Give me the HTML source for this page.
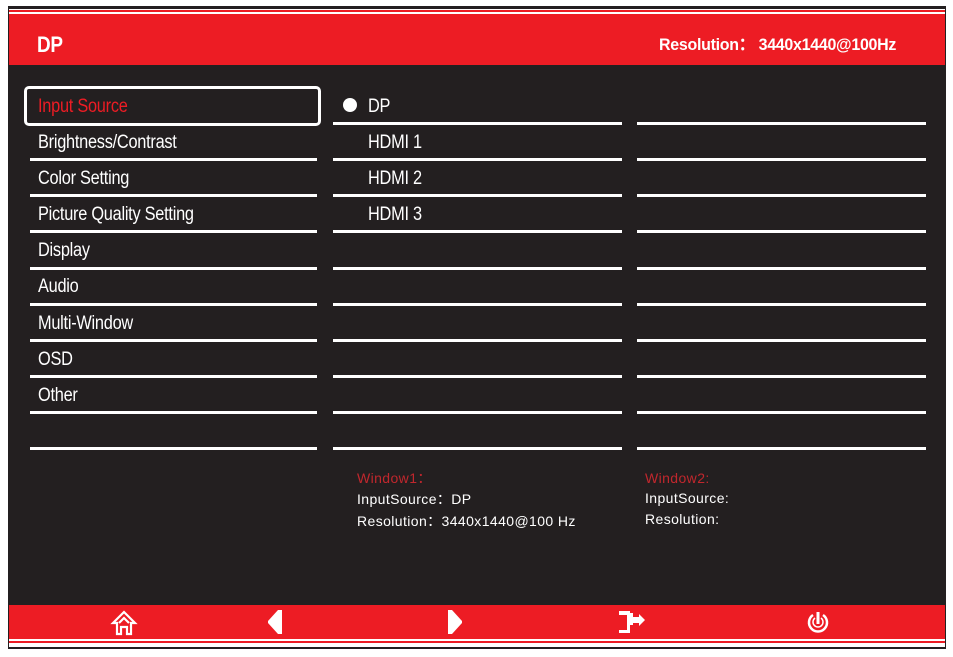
<!DOCTYPE html>
<html><head><meta charset="utf-8"><style>
*{margin:0;padding:0;box-sizing:border-box}
body{width:953px;height:657px;background:#fff;position:relative;overflow:hidden;font-family:"Liberation Sans",sans-serif}
.a{position:absolute}
.ln{position:absolute;height:3px;background:#fff}
.t{position:absolute;color:#fff;font-size:19px;line-height:20px;letter-spacing:-0.3px;transform:scaleX(0.86);transform-origin:0 0;white-space:nowrap}
.s{position:absolute;font-family:"Liberation Sans",sans-serif;font-size:14px;line-height:16px;color:#fff;letter-spacing:0.4px;white-space:nowrap}
</style></head><body>
<div class="a" style="left:8px;top:6px;width:938px;height:643px;background:#231f20"></div>
<div class="a" style="left:9px;top:9px;width:936px;height:3px;background:#fff"></div>
<div class="a" style="left:9px;top:10px;width:936px;height:2px;background:#ed1c24"></div>
<div class="a" style="left:9px;top:12px;width:936px;height:2px;background:#fff"></div>
<div class="a" style="left:9px;top:14px;width:936px;height:51px;background:#ed1c24"></div>
<div class="t" style="left:37px;top:35px;font-weight:bold;font-size:22px">DP</div>
<div class="t" style="left:659px;top:35px;font-weight:bold;font-size:17px;transform:scaleX(0.94)">Resolution： 3440x1440@100Hz</div>

<div class="a" style="left:9px;top:605px;width:936px;height:34px;background:#ed1c24"></div>
<div class="a" style="left:9px;top:639px;width:936px;height:2px;background:#fff"></div>
<div class="a" style="left:9px;top:641px;width:936px;height:2px;background:#ed1c24"></div>
<div class="a" style="left:9px;top:643px;width:936px;height:4px;background:#fff"></div>

<div class="a" style="left:24px;top:86px;width:297px;height:40px;border:3px solid #fff;border-radius:5px"></div>
<div class="t" style="left:38px;top:97px;color:#ed1c24">Input Source</div>
<div class="t" style="left:38px;top:133px">Brightness/Contrast</div>
<div class="t" style="left:38px;top:169px">Color Setting</div>
<div class="t" style="left:38px;top:205px">Picture Quality Setting</div>
<div class="t" style="left:38px;top:241px">Display</div>
<div class="t" style="left:38px;top:277px">Audio</div>
<div class="t" style="left:38px;top:314px">Multi-Window</div>
<div class="t" style="left:38px;top:350px">OSD</div>
<div class="t" style="left:38px;top:386px">Other</div>

<div class="a" style="left:343px;top:98px;width:14px;height:14px;border-radius:50%;background:#fff"></div>
<div class="t" style="left:368px;top:97px">DP</div>
<div class="t" style="left:368px;top:133px">HDMI 1</div>
<div class="t" style="left:368px;top:169px">HDMI 2</div>
<div class="t" style="left:368px;top:205px">HDMI 3</div>

<div id="lines"></div>
<script>
var ys=[122,158,194,230,267,303,339,375,411,447],h='';
ys.forEach(function(y,i){
 if(i>0)h+='<div class="ln" style="left:30px;top:'+y+'px;width:287px"></div>';
 h+='<div class="ln" style="left:333px;top:'+y+'px;width:289px"></div>';
 h+='<div class="ln" style="left:637px;top:'+y+'px;width:289px"></div>';
});
document.getElementById('lines').innerHTML=h;
</script>

<div class="s" style="left:357px;top:470px;color:#c1272d">Window1：</div>
<div class="s" style="left:357px;top:491px">InputSource：DP</div>
<div class="s" style="left:357px;top:513px">Resolution：3440x1440@100 Hz</div>
<div class="s" style="left:645px;top:470px;color:#c1272d">Window2:</div>
<div class="s" style="left:645px;top:490px">InputSource:</div>
<div class="s" style="left:645px;top:511px">Resolution:</div>

<svg class="a" style="left:110px;top:609px" width="30" height="28" viewBox="0 0 30 28" fill="none" stroke="#fff" stroke-width="2.2">
<path d="M3 14 L14 3 L25 14 L21 14 L21 25 L17 25 L17 18 L11 18 L11 25 L7 25 L7 14 Z"/><path d="M9 14 L14 9 L19 14"/></svg>
<svg class="a" style="left:264px;top:609px" width="20" height="26" viewBox="0 0 20 26"><path d="M18 1 L18 25 L14 25 L4 14 L4 12 L14 1 Z" fill="#fff"/></svg>
<svg class="a" style="left:446px;top:609px" width="22" height="26" viewBox="0 0 22 26"><path d="M2 1 L2 25 L6 25 L16 14 L16 12 L6 1 Z" fill="#fff"/></svg>
<svg class="a" style="left:616px;top:609px" width="34" height="26" viewBox="0 0 34 26" fill="#fff">
<path d="M3 2 L14 2 L14 4 L17 4 L17 16 L14 16 L14 24 L3 24 L3 21 L11 21 L11 6 L3 6 Z"/><path d="M17 8 L23 8 L23 5 L29 11 L23 17 L23 14 L17 14 Z"/></svg>
<svg class="a" style="left:805px;top:609px" width="26" height="26" viewBox="0 0 26 26" fill="none" stroke="#fff">
<path d="M8 6 A9 9 0 1 0 18 6" stroke-width="2.5"/><path d="M10 9 A5 5 0 1 0 16 9" stroke-width="1.5"/><path d="M13 3 L13 15" stroke-width="3"/></svg>
</body></html>
